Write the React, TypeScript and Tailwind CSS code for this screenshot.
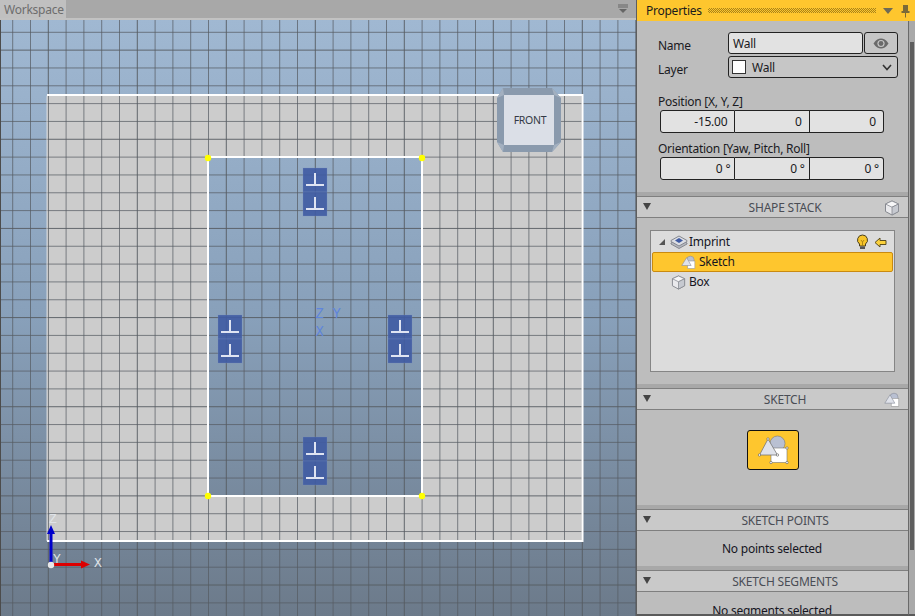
import React from "react";

const F = { fontFamily: '"Noto Sans", "Open Sans", sans-serif' };

function Viewport() {
  const xs = Array.from({ length: 36 }, (_, i) => 12.7 + 17.8 * i);
  const ys = Array.from({ length: 34 }, (_, i) => 32.3 + 17.83 * i - 20);
  const marks = [[303, 148], [303, 172], [218, 295], [218, 319], [388, 295], [388, 319], [303, 417], [303, 441]];
  return (
    <svg width="636" height="596" viewBox="0 0 636 596" className="block">
      <defs>
        <linearGradient id="bg" x1="0" y1="0" x2="0" y2="1">
          <stop offset="0" stopColor="#a0b8d2" />
          <stop offset="0.5" stopColor="#88a0ba" />
          <stop offset="1" stopColor="#6c7a8a" />
        </linearGradient>
      </defs>
      <rect width="636" height="596" fill="url(#bg)" />
      <path d="M47 75H582V521H47Z M208 137V476H422V137Z" fill="#cccccc" fillRule="evenodd" />
      {xs.map((x, i) => (
        <line key={i} x1={x} y1="0" x2={x} y2="596" stroke="#565c62" strokeOpacity={(i - 7) % 5 === 0 ? 0.9 : 0.72} strokeWidth="1" />
      ))}
      {ys.map((y, i) => (
        <line key={i} x1="0" y1={y} x2="636" y2={y} stroke="#565c62" strokeOpacity={(i - 1) % 5 === 0 ? 0.9 : 0.72} strokeWidth="1" />
      ))}
      <line x1="0.5" y1="0" x2="0.5" y2="596" stroke="#4c4c4c" />
      <path d="M47 75.5V521" stroke="#e6e6e6" strokeOpacity="0.55" strokeWidth="1.5" fill="none" />
      <path d="M47 75H582.5V521H47" stroke="#ffffff" strokeWidth="2" fill="none" />
      <rect x="208" y="137" width="214" height="339" stroke="#ffffff" strokeWidth="2" fill="none" />
      {[[208, 138], [422, 138], [208, 476], [422, 476]].map(([x, y], i) => (
        <circle key={i} cx={x} cy={y} r="3.2" fill="#ffff00" />
      ))}
      {marks.map(([x, y], i) => (
        <g key={i}>
          <rect x={x} y={y} width="24" height="24" fill="#3f5ba3" fillOpacity="0.9" stroke="#7d90bd" strokeOpacity="0.5" strokeWidth="0.5" />
          <path d="M12 5 V17 M3 17 H21" transform={`translate(${x} ${y})`} stroke="#dfe4f2" strokeWidth="2" fill="none" />
        </g>
      ))}
      <g fontFamily="Liberation Mono, monospace" fontSize="14" fill="#5f85dc">
        <text x="315.5" y="298">Z</text>
        <text x="332.5" y="298">Y</text>
        <text x="315.5" y="316">X</text>
      </g>
      <path d="M497 78L503 68H552L561 78V122L552 132H503L497 122Z" fill="#8a9aad" />
      <rect x="504" y="75" width="50" height="50" fill="#dbdfe7" />
      <path d="M504 75L497 78L503 68ZM554 75L552 68L561 78ZM504 125L497 122L503 132ZM554 125L561 122L552 132Z" fill="#a3b0c0" />
      <text x="530" y="104" textAnchor="middle" fontFamily="Noto Sans, sans-serif" fontSize="10.5" fill="#333a45">FRONT</text>
      <g fontFamily="Liberation Mono, monospace" fontSize="13" fill="#dfe3e8">
        <text x="49" y="503">Z</text>
        <text x="53" y="543">Y</text>
        <text x="94" y="547">X</text>
      </g>
      <path d="M49.5 543V514H47L51 505L55 514H52.5V543Z" fill="#0000cc" />
      <path d="M53 543H81V540.5L90 544.5L81 548.5V546H53Z" fill="#dd0000" />
      <circle cx="51" cy="545" r="3.2" fill="#e8e8e8" />
    </svg>
  );
}

function SketchIcon({ size = 15 }: { size?: number }) {
  return (
    <svg width={size} height={size} viewBox="0 0 20 20" className="block">
      <circle cx="12.5" cy="6.5" r="5" fill="#b9c0d2" stroke="#8b8f9c" strokeWidth="0.8" />
      <rect x="9" y="8" width="9.5" height="10" fill="#ffffff" stroke="#9a9a9a" strokeWidth="0.8" />
      <path d="M7.5 3.5L13.5 14H1Z" fill="#dfe2ea" stroke="#8b8f9c" strokeWidth="0.8" />
    </svg>
  );
}

function CubeIcon({ size = 16 }: { size?: number }) {
  return (
    <svg width={size} height={size} viewBox="0 0 16 16" className="block">
      <path d="M8 1L14.5 4V11.5L8 15L1.5 11.5V4Z" fill="#e9e9ec" stroke="#85888f" strokeWidth="1" />
      <path d="M1.5 4L8 7.2L14.5 4L8 1Z" fill="#f7f7f8" stroke="#85888f" strokeWidth="0.8" />
      <path d="M8 7.2V15L14.5 11.5V4Z" fill="#c6c9d0" stroke="#85888f" strokeWidth="0.8" />
    </svg>
  );
}

function SectionHeader({ title, icon }: { title: string; icon?: React.ReactNode }) {
  return (
    <div className="relative flex h-[22px] shrink-0 items-center justify-center border-y border-[#7f7f7f] bg-[#c9c9c9] pl-[25px] pt-[1px] text-[12px] tracking-[-0.2px] text-[#4a4d55]">
      <span className="absolute left-[6px] top-[6px] h-0 w-0 border-x-[4px] border-t-[7px] border-x-transparent border-t-[#444]" />
      <span>{title}</span>
      {icon && <span className="absolute right-[8px] top-[3px]">{icon}</span>}
    </div>
  );
}

function Field({ value, deg, first, last }: { value: string; deg?: boolean; first?: boolean; last?: boolean }) {
  return (
    <div className={`flex h-[23px] flex-1 items-center justify-end bg-[#e2e2e2] pr-[7px] pt-[1px] text-[12px] text-[#1a1a22] border-y border-[#222] border-r ${first ? "border-l rounded-l-[3px]" : ""} ${last ? "rounded-r-[3px]" : ""}`}>
      {value}{deg && <span className="ml-[3px] -mr-[3px]">°</span>}
    </div>
  );
}

export default function App() {
  return (
    <div className="flex h-[616px] w-[915px] overflow-hidden bg-[#a9a9a9] tracking-[-0.25px]" style={F}>
      <div className="flex w-[636px] shrink-0 flex-col">
        <div className="relative flex h-[18px] bg-[#a8a8a8]">
          <div className="flex w-[66px] items-center bg-[#c0c0c0] pl-[4px] pt-[2px] text-[12px] text-[#6d6d6d]">Workspace</div>
          <svg width="12" height="10" viewBox="0 0 12 10" className="absolute left-[617px] top-[4px]">
            <path d="M1 1H11M1 3H11" stroke="#666" />
            <path d="M2 5H10L6 9Z" fill="#666" />
          </svg>
        </div>
        <div className="h-[2px] bg-[#c2c2c2]" />
        <Viewport />
      </div>

      <div className="flex w-[279px] shrink-0 flex-col border-l border-[#5e5e5e] bg-[#bdbdbd]">
        <div className="flex h-[21px] shrink-0 items-center bg-[#fec62e] pl-[9px] pr-[5px] text-[12px] text-[#1b1b1b]">
          <span>Properties</span>
          <div className="ml-[6px] mr-[7px] h-[5px] flex-1 bg-[conic-gradient(#a8831a_25%,transparent_0_50%,#a8831a_0_75%,transparent_0)] bg-[length:2px_2px]" />
          <span className="mr-[8px] h-0 w-0 border-x-[5px] border-t-[6px] border-x-transparent border-t-[#6f6a55]" />
          <svg width="9" height="14" viewBox="0 0 9 14"><path d="M2 1H7V7H8.5V9H5V13.5H4V9H.5V7H2Z" fill="#7a6a38" /></svg>
        </div>

        <div className="flex min-h-0 flex-1">
          <div className="flex w-[271px] shrink-0 flex-col overflow-hidden border-b-2 border-[#5a5a5a]">
            <div className="h-[171px] shrink-0 pl-[21px] pr-[10px] pt-[11px] text-[12px] text-[#1a1a22]">
              <div className="flex items-start">
                <div className="w-[70px] pt-[2px] leading-[24px]">
                  <div>Name</div>
                  <div>Layer</div>
                </div>
                <div className="flex flex-1 flex-col gap-[2px]">
                  <div className="flex gap-[1px]">
                    <div className="flex h-[22px] flex-1 items-center rounded-[3px] border border-[#222] bg-[#e2e2e2] pl-[4px] pt-[1px]">Wall</div>
                    <div className="flex h-[22px] w-[34px] items-center justify-center rounded-[3px] border border-[#222] bg-[#c6c6c6]">
                      <svg width="16" height="11" viewBox="0 0 16 11">
                        <path d="M.5 5.5C3 1.5 5.5.5 8 .5S13 1.5 15.5 5.5C13 9.5 10.5 10.5 8 10.5S3 9.5.5 5.5Z" fill="#6a6a6a" />
                        <circle cx="8" cy="5.5" r="3.6" fill="#c6c6c6" />
                        <circle cx="8" cy="5.5" r="2.4" fill="#6a6a6a" />
                      </svg>
                    </div>
                  </div>
                  <div className="flex h-[22px] items-center rounded-[3px] border border-[#222] bg-[#c6c6c6] pl-[3px] pr-[5px]">
                    <span className="h-[14px] w-[14px] border border-[#333] bg-white" />
                    <span className="ml-[6px] flex-1 pt-[1px]">Wall</span>
                    <svg width="10" height="7" viewBox="0 0 10 7"><path d="M1 1L5 5.5L9 1" stroke="#333" strokeWidth="1.6" fill="none" /></svg>
                  </div>
                </div>
              </div>
              <div className="mt-[11px] pt-[1px] leading-[16px]">Position [X, Y, Z]</div>
              <div className="ml-[2px] mr-[14px] flex">
                <Field value="-15.00" first />
                <Field value="0" />
                <Field value="0" last />
              </div>
              <div className="mt-[7px] pt-[1px] leading-[16px]">Orientation [Yaw, Pitch, Roll]</div>
              <div className="ml-[2px] mr-[14px] flex">
                <Field value="0" deg first />
                <Field value="0" deg />
                <Field value="0" deg last />
              </div>
            </div>

            <div className="h-[4px] shrink-0 bg-[#a8a8a8]" />
            <SectionHeader title="SHAPE STACK" icon={<CubeIcon />} />
            <div className="h-[166px] shrink-0 px-[13px] pt-[12px]">
              <div className="h-[142px] border border-[#858585] bg-[#dcdcdc] px-[1px] pt-[1px] text-[12px] text-[#15151f]">
                <div className="flex h-[20px] items-center pl-[7px] pr-[6px]">
                  <span className="h-0 w-0 border-b-[6px] border-l-[6px] border-b-[#555] border-l-transparent" />
                  <svg width="18" height="14" viewBox="0 0 18 14" className="ml-[5px]">
                    <path d="M9 3.5L17 8V9L9 13.5L1 9V8Z" fill="#b5b8c0" stroke="#85888f" />
                    <path d="M9 1L17 5.5V6.5L9 11L1 6.5V5.5Z" fill="#dcdee4" stroke="#85888f" />
                    <path d="M9 3L13 5.6L9 8L5 5.6Z" fill="#3f5ba3" />
                  </svg>
                  <span className="ml-[1px] flex-1">Imprint</span>
                  <svg width="13" height="16" viewBox="0 0 13 16">
                    <path d="M6.5 1A5 5 0 0 1 9.5 10V12H3.5V10A5 5 0 0 1 6.5 1Z" fill="#f7c52a" stroke="#4a4020" />
                    <path d="M5 6L6.5 8L8 6M6.5 8V11.5" stroke="#a07a10" fill="none" strokeWidth="0.8" />
                    <rect x="4" y="12.5" width="5" height="2.5" fill="#555" />
                  </svg>
                  <svg width="13" height="11" viewBox="0 0 13 11" className="ml-[5px]">
                    <path d="M6 1V3.5H12V7.5H6V10L1 5.5Z" fill="#fbd13c" stroke="#5b4e20" />
                  </svg>
                </div>
                <div className="flex h-[20px] items-center rounded-[2px] border border-[#c98a10] bg-[#fec62e] pl-[28px]">
                  <SketchIcon />
                  <span className="ml-[3px]">Sketch</span>
                </div>
                <div className="flex h-[20px] items-center pl-[19px]">
                  <CubeIcon size={15} />
                  <span className="ml-[3px]">Box</span>
                </div>
              </div>
            </div>

            <div className="h-[4px] shrink-0 bg-[#a8a8a8]" />
            <SectionHeader title="SKETCH" icon={<SketchIcon size={16} />} />
            <div className="flex h-[95px] shrink-0 justify-center pt-[20px]">
              <div className="flex h-[40px] w-[52px] rounded-[3px] border border-[#111] bg-[#fec62e]">
                <svg width="50" height="38" viewBox="1 1 50 38">
                  <circle cx="30.5" cy="13.5" r="7.5" fill="#b9c0d2" stroke="#777" strokeWidth="0.6" />
                  <rect x="24" y="18" width="16" height="14.5" fill="#fff" stroke="#777" strokeWidth="0.6" />
                  <path d="M21 9L30.5 25H12.5Z" fill="#dfe2ea" stroke="#777" strokeWidth="0.8" />
                  {[[21, 9], [12.5, 25], [30.5, 25], [40, 18], [24, 32.5], [40, 32.5]].map(([x, y], i) => (
                    <circle key={i} cx={x} cy={y} r="1.2" fill="#fff" stroke="#555" strokeWidth="0.6" />
                  ))}
                </svg>
              </div>
            </div>

            <div className="h-[4px] shrink-0 bg-[#a8a8a8]" />
            <SectionHeader title="SKETCH POINTS" />
            <div className="flex h-[35px] shrink-0 items-center justify-center pr-[1px] text-[12px] text-[#15151f]">No points selected</div>

            <div className="h-[4px] shrink-0 bg-[#a8a8a8]" />
            <SectionHeader title="SKETCH SEGMENTS" />
            <div className="flex h-[35px] shrink-0 justify-center pt-[10px] pr-[1px] text-[12px] text-[#15151f]">No segments selected</div>
          </div>

          <div className="relative flex-1 border-l border-[#6a6a6a] border-b-2 border-b-[#5a5a5a] bg-[#a9a9a9]">
            <div className="absolute left-[1px] top-[21px] h-[508px] w-[4px] bg-[#5e5e5e]" />
          </div>
        </div>
      </div>
    </div>
  );
}
